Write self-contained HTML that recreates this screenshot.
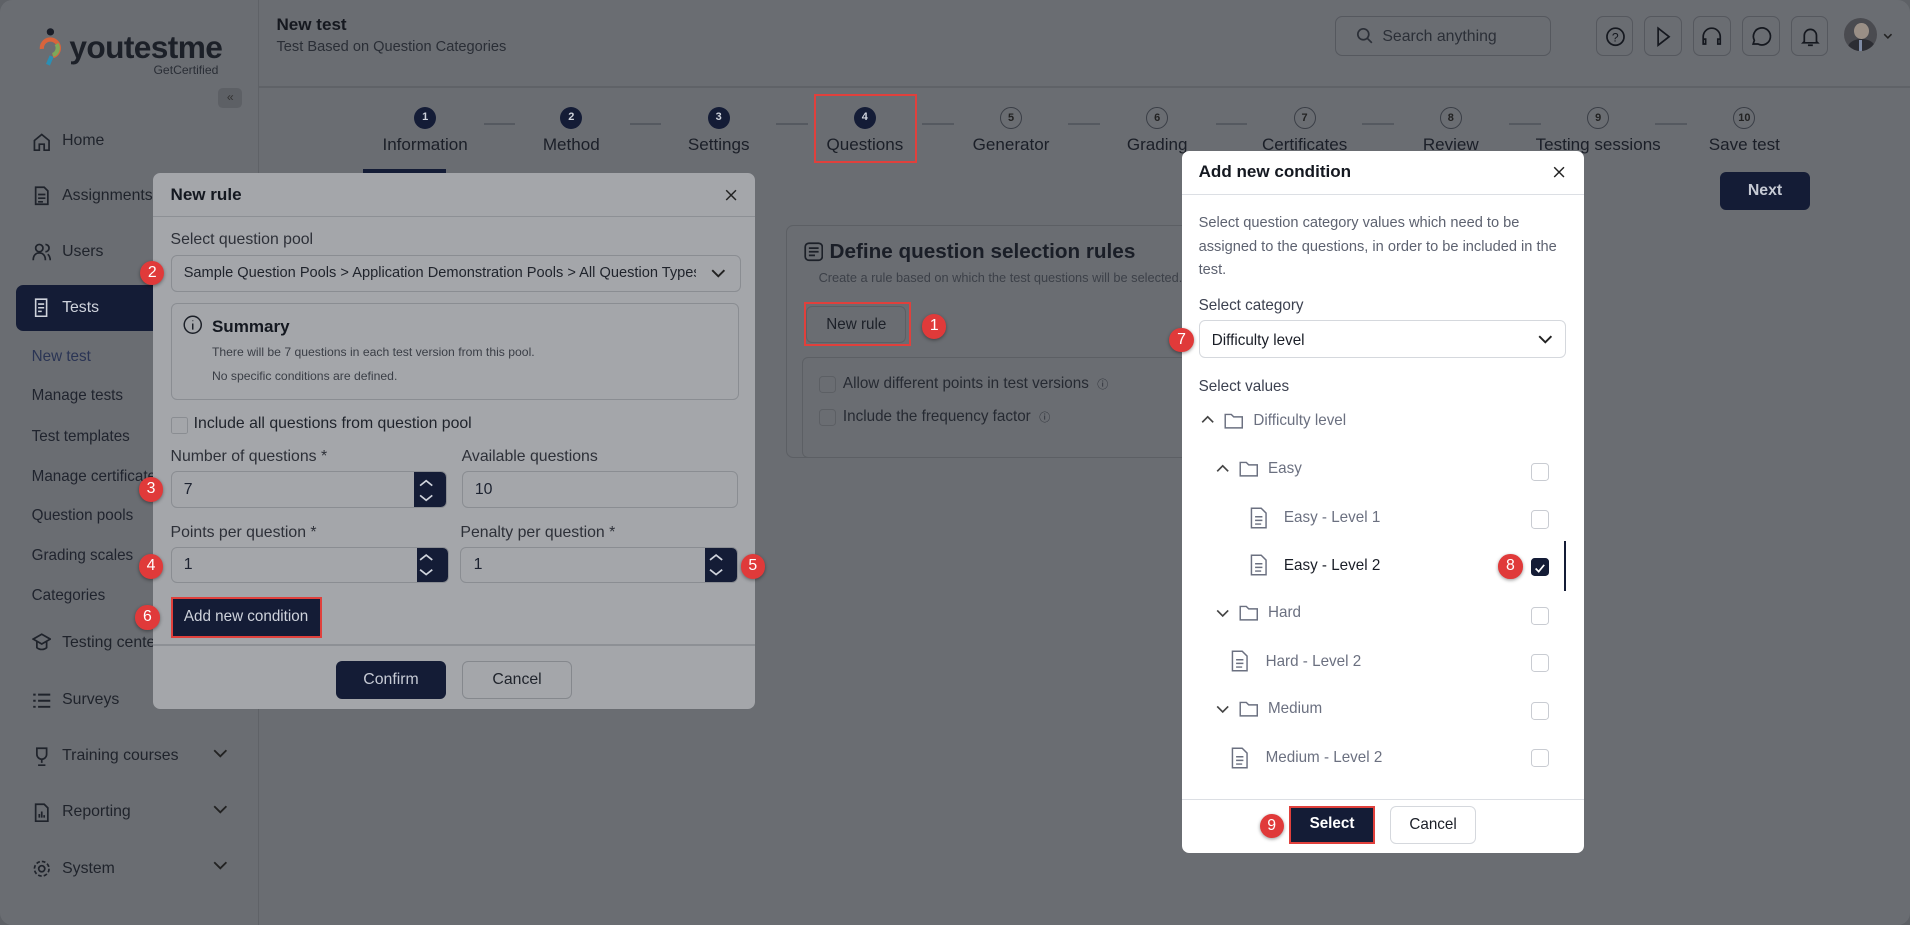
<!DOCTYPE html>
<html><head><meta charset="utf-8"><style>
*{box-sizing:border-box;margin:0;padding:0}
html,body{width:1910px;height:925px;overflow:hidden;background:#5e6166}
#w{zoom:1.21811;width:1568px;height:759px;position:relative;font-family:"Liberation Sans",sans-serif;color:#1c2230;background:#6a6d72;border-radius:10px;overflow:hidden}
.a{position:absolute}
.t{font-size:13px;color:#20242e}
.side .it{position:absolute;left:26px;font-size:13px;color:#1f232b;display:flex;align-items:center;gap:9px}
.ic{width:16px;height:16px}
.step{position:absolute;top:88px;text-align:center;width:120px;margin-left:-60px}
.step .c{width:18px;height:18px;border-radius:50%;margin:0 auto;font-size:9px;font-weight:bold;line-height:18px}
.step .l{font-size:14px;margin-top:5px;color:#1b1f28}
.dk{background:#141c36;color:#cfd3dc}
.lt{border:1px solid #3a3e46;color:#222}
.dash{position:absolute;top:101px;width:26px;height:2px;background:#555960}
.badge{position:absolute;width:20px;height:20px;border-radius:50%;background:#e03a3a;color:#fff;font-size:13px;text-align:center;line-height:20px;box-shadow:0 1px 3px rgba(0,0,0,.4)}
.fld{position:absolute;border:1px solid #8a8d92;border-radius:5px;background:#a4a6aa;font-size:13px;padding:0 10px;display:flex;align-items:center;white-space:nowrap;overflow:hidden}
.spin{position:absolute;right:-1px;top:-1px;bottom:-1px;width:27px;background:#141c36;border-radius:0 5px 5px 0}
.lbl{position:absolute;font-size:13px;color:#2d3038}
.cb{position:absolute;width:15px;height:15px;border:1px solid #c9ccd2;border-radius:3px;background:#fff}
.row{position:absolute;font-size:12.5px;color:#6b7080;display:flex;align-items:center;gap:8px}
.chev{position:absolute}
</style></head><body><div id="w">
<div class="a" style="left:212px;top:0;width:1px;height:759px;background:#5f6267"></div>
<div class="a" style="left:213px;top:71px;width:1355px;height:1px;background:#5f6267"></div>
<div class="a" style="left:30px;top:22px;width:22px;height:32px">
<svg width="22" height="32" viewBox="0 0 22 32"><circle cx="11" cy="4" r="3" fill="#1a1e28"/><path d="M4 18a7 7 0 1 1 9 6" stroke="#d8643c" stroke-width="3.5" fill="none"/><path d="M12 24l-3 7" stroke="#2b8fb4" stroke-width="3.5"/><path d="M16 14a6 6 0 0 1-3 9" stroke="#7da85a" stroke-width="3.5" fill="none"/></svg></div>
<div class="a" style="left:57px;top:24px;font-size:26px;font-weight:bold;color:#1c2028;letter-spacing:-.5px">youtestme</div>
<div class="a" style="left:126px;top:52px;font-size:10px;color:#2a2e36">GetCertified</div>
<div class="a" style="left:179px;top:72px;width:20px;height:17px;border-radius:4px;background:#5d6065;font-size:10px;text-align:center;line-height:16px;color:#333">«</div>
<div class="side">
<div class="it" style="top:108px"><svg class="ic" viewBox="0 0 16 16" fill="none" stroke="#1f232b" stroke-width="1.4"><path d="M2 7l6-5 6 5v8H10v-5H6v5H2z"/></svg>Home</div>
<div class="it" style="top:153px"><svg class="ic" viewBox="0 0 16 16" fill="none" stroke="#1f232b" stroke-width="1.4"><path d="M3 1h7l3 3v11H3z M5 7h6M5 10h6M5 13h4"/></svg>Assignments</div>
<div class="it" style="top:199px"><svg class="ic" viewBox="0 0 16 16" fill="none" stroke="#1f232b" stroke-width="1.4"><circle cx="6" cy="5" r="3"/><path d="M1 15c0-4 2-6 5-6s5 2 5 6M11 2a3 3 0 0 1 0 6M13 10c1 1 2 3 2 5"/></svg>Users</div>
</div>
<div class="a" style="left:13px;top:234px;width:200px;height:38px;background:#141c36;border-radius:6px 0 0 6px"></div>
<div class="a" style="left:26px;top:245px;font-size:13px;color:#cfd3dc;display:flex;gap:9px;align-items:center"><svg class="ic" viewBox="0 0 16 16" fill="none" stroke="#cfd3dc" stroke-width="1.3"><path d="M3 1h9v14H3zM5 5h5M5 8h5M5 11h3"/></svg>Tests</div>
<div class="a" style="left:26px;top:286px;font-size:12.5px;color:#2a3454">New test</div>
<div class="a t" style="left:26px;top:318px;font-size:12.5px">Manage tests</div>
<div class="a t" style="left:26px;top:351px;font-size:12.5px">Test templates</div>
<div class="a t" style="left:26px;top:384px;font-size:12.5px">Manage certificates</div>
<div class="a t" style="left:26px;top:416px;font-size:12.5px">Question pools</div>
<div class="a t" style="left:26px;top:449px;font-size:12.5px">Grading scales</div>
<div class="a t" style="left:26px;top:482px;font-size:12.5px">Categories</div>
<div class="side">
<div class="it" style="top:520px"><svg class="ic" viewBox="0 0 16 16" fill="none" stroke="#1f232b" stroke-width="1.4"><path d="M8 1l7 4-7 4-7-4zM4 7v5c2 2 6 2 8 0V7"/></svg>Testing centers</div>
<div class="it" style="top:567px"><svg class="ic" viewBox="0 0 16 16" fill="none" stroke="#1f232b" stroke-width="1.6"><path d="M1 3h2M1 8h2M1 13h2M5 3h10M5 8h10M5 13h10"/></svg>Surveys</div>
<div class="it" style="top:613px"><svg class="ic" viewBox="0 0 16 16" fill="none" stroke="#1f232b" stroke-width="1.4"><path d="M4 1h8v5a4 4 0 0 1-8 0zM8 10v3M5 15h6"/></svg>Training courses</div>
<div class="it" style="top:659px"><svg class="ic" viewBox="0 0 16 16" fill="none" stroke="#1f232b" stroke-width="1.4"><path d="M3 1h7l3 3v11H3zM6 12V9M8 12V7M10 12v-2"/></svg>Reporting</div>
<div class="it" style="top:705px"><svg class="ic" viewBox="0 0 16 16" fill="none" stroke="#1f232b" stroke-width="1.4"><circle cx="8" cy="8" r="2.5"/><circle cx="8" cy="8" r="6" stroke-dasharray="3 1.7"/></svg>System</div>
</div>
<svg class="chev" style="left:175px;top:615px" width="12" height="8" fill="none" stroke="#222" stroke-width="1.5"><path d="M1 1l5 5 5-5"/></svg>
<svg class="chev" style="left:175px;top:661px" width="12" height="8" fill="none" stroke="#222" stroke-width="1.5"><path d="M1 1l5 5 5-5"/></svg>
<svg class="chev" style="left:175px;top:707px" width="12" height="8" fill="none" stroke="#222" stroke-width="1.5"><path d="M1 1l5 5 5-5"/></svg>
<div class="a" style="left:227px;top:12px;font-size:14px;font-weight:bold;color:#15181f">New test</div>
<div class="a" style="left:227px;top:32px;font-size:12px;color:#2a2e36">Test Based on Question Categories</div>
<div class="a" style="left:1096px;top:13px;width:177px;height:33px;border:1px solid #55585e;border-radius:6px;font-size:13px;color:#2b2f37;padding:9px 0 0 38px">Search anything</div>
<svg class="a" style="left:1113px;top:22px" width="14" height="14" viewBox="0 0 14 14" fill="none" stroke="#2b2f37" stroke-width="1.4"><circle cx="6" cy="6" r="4.5"/><path d="M9.5 9.5L13 13"/></svg>
<div class="a" style="left:1310px;top:13px;display:flex;gap:9px">
<div style="width:31px;height:33px;border:1px solid #55585e;border-radius:6px"></div><div style="width:31px;height:33px;border:1px solid #55585e;border-radius:6px"></div><div style="width:31px;height:33px;border:1px solid #55585e;border-radius:6px"></div><div style="width:31px;height:33px;border:1px solid #55585e;border-radius:6px"></div><div style="width:31px;height:33px;border:1px solid #55585e;border-radius:6px"></div></div>
<svg class="a" style="left:1310px;top:13px" width="200" height="33" fill="none" stroke="#15181f" stroke-width="1.4"><circle cx="16" cy="17" r="7"/><text x="13" y="21" font-size="10" fill="#15181f" stroke="none" font-family="Liberation Sans">?</text><path d="M51 10l9 7-9 7z"/><path d="M88 21v-4a7 7 0 0 1 14 0v4M88 19h2v4h-2zM100 19h2v4h-2z"/><path d="M129 23l1-3a7 7 0 1 1 3 3z"/><path d="M171 21v-5a5 5 0 0 1 10 0v5l1 1h-12zM174 24h4"/></svg>
<div class="a" style="left:1514px;top:15px;width:27px;height:27px;border-radius:50%;overflow:hidden;background:#4a4b50">
<div class="a" style="left:8px;top:4px;width:12px;height:13px;border-radius:50%;background:#9a8f86"></div>
<div class="a" style="left:3px;top:17px;width:22px;height:14px;border-radius:50% 50% 0 0;background:#2c2d33"></div>
<div class="a" style="left:12px;top:18px;width:3px;height:9px;background:#7e8aa3"></div></div>
<svg class="chev" style="left:1546px;top:27px" width="8" height="5" fill="none" stroke="#222" stroke-width="1.3"><path d="M1 1l3 3 3-3"/></svg>
<div class="step" style="left:349px"><div class="c dk">1</div><div class="l">Information</div></div>
<div class="step" style="left:469px"><div class="c dk">2</div><div class="l">Method</div></div>
<div class="step" style="left:590px"><div class="c dk">3</div><div class="l">Settings</div></div>
<div class="step" style="left:710px"><div class="c dk">4</div><div class="l">Questions</div></div>
<div class="step" style="left:830px"><div class="c lt">5</div><div class="l">Generator</div></div>
<div class="step" style="left:950px"><div class="c lt">6</div><div class="l">Grading</div></div>
<div class="step" style="left:1071px"><div class="c lt">7</div><div class="l">Certificates</div></div>
<div class="step" style="left:1191px"><div class="c lt">8</div><div class="l">Review</div></div>
<div class="step" style="left:1312px"><div class="c lt">9</div><div class="l">Testing sessions</div></div>
<div class="step" style="left:1432px"><div class="c lt">10</div><div class="l">Save test</div></div>
<div class="dash" style="left:397px"></div><div class="dash" style="left:517px"></div><div class="dash" style="left:637px"></div><div class="dash" style="left:757px"></div><div class="dash" style="left:877px"></div><div class="dash" style="left:998px"></div><div class="dash" style="left:1118px"></div><div class="dash" style="left:1239px"></div><div class="dash" style="left:1359px"></div>
<div class="a" style="left:668px;top:77px;width:85px;height:57px;border:2px solid #e0403c"></div>
<div class="a" style="left:298px;top:139px;width:68px;height:3px;background:#141c36"></div>
<div class="a" style="left:1412px;top:141px;width:74px;height:31px;background:#141c36;border-radius:5px;color:#c6cad4;font-size:13px;font-weight:bold;text-align:center;line-height:31px">Next</div>
<div class="a" style="left:645px;top:185px;width:340px;height:191px;border:1px solid #5c5f64;border-radius:6px"></div>
<svg class="a" style="left:660px;top:199px" width="16" height="16" fill="none" stroke="#1c2028" stroke-width="1.4"><rect x="1" y="1" width="14" height="14" rx="3"/><path d="M4 5h8M4 8h8M4 11h5"/></svg>
<div class="a" style="left:681px;top:197px;font-size:17px;font-weight:bold;color:#1a1e27">Define question selection rules</div>
<div class="a" style="left:672px;top:222px;font-size:10.5px;color:#3c4048">Create a rule based on which the test questions will be selected.</div>
<div class="a" style="left:660px;top:248px;width:88px;height:36px;border:2px solid #e0403c"></div>
<div class="a" style="left:662px;top:251px;width:82px;height:31px;border:1px solid #5c5f64;border-radius:5px;font-size:12.5px;text-align:center;line-height:30px;color:#1c2028">New rule</div>
<div class="badge" style="left:757px;top:258px">1</div>
<div class="a" style="left:658px;top:293px;width:330px;height:83px;border:1px solid #5c5f64;border-radius:5px"></div>
<div class="a" style="left:672px;top:309px;width:14px;height:14px;border:1px solid #5c5f64;border-radius:3px"></div>
<div class="a" style="left:692px;top:308px;font-size:12.5px;color:#262a32">Allow different points in test versions &nbsp;<span style="font-size:9px">ⓘ</span></div>
<div class="a" style="left:672px;top:336px;width:14px;height:14px;border:1px solid #5c5f64;border-radius:3px"></div>
<div class="a" style="left:692px;top:335px;font-size:12.5px;color:#262a32">Include the frequency factor &nbsp;<span style="font-size:9px">ⓘ</span></div>
<div class="a" style="left:126px;top:142px;width:494px;height:440px;background:#a4a6aa;border-radius:6px">
<div class="a" style="left:14px;top:10px;font-size:14px;font-weight:bold;color:#141820">New rule</div>
<svg class="a" style="left:469px;top:13px" width="10" height="10" stroke="#222" stroke-width="1.2"><path d="M1 1l8 8M9 1l-8 8"/></svg>
<div class="a" style="left:0;top:35px;width:494px;height:1px;background:#8d9095"></div>
<div class="lbl" style="left:14px;top:48px">Select question pool</div>
<div class="fld" style="left:14px;top:67px;width:468px;height:31px;color:#1f232b;font-size:12px;padding-right:36px"><span style="overflow:hidden;display:block;width:424px">Sample Question Pools &gt; Application Demonstration Pools &gt; All Question Types</span></div>
<svg class="a" style="left:458px;top:79px" width="12" height="8" fill="none" stroke="#222" stroke-width="1.6"><path d="M1 1l5 5 5-5"/></svg>
<div class="a" style="left:14px;top:107px;width:467px;height:79px;border:1px solid #8a8d92;border-radius:5px"></div>
<svg class="a" style="left:24px;top:117px" width="16" height="16" fill="none" stroke="#1c2028" stroke-width="1.2"><circle cx="8" cy="8" r="7"/><path d="M8 7v5M8 4.5v.5"/></svg>
<div class="a" style="left:48px;top:118px;font-size:14px;font-weight:bold;color:#141820">Summary</div>
<div class="a" style="left:48px;top:141px;font-size:10px;color:#3a3e46">There will be 7 questions in each test version from this pool.</div>
<div class="a" style="left:48px;top:161px;font-size:10px;color:#3a3e46">No specific conditions are defined.</div>
<div class="a" style="left:14px;top:200px;width:14px;height:14px;border:1px solid #8a8d92;border-radius:2px"></div>
<div class="lbl" style="left:33px;top:199px;color:#20242c">Include all questions from question pool</div>
<div class="lbl" style="left:14px;top:226px">Number of questions *</div>
<div class="lbl" style="left:253px;top:226px">Available questions</div>
<div class="fld" style="left:14px;top:245px;width:227px;height:30px">7<div class="spin"></div></div>
<div class="fld" style="left:253px;top:245px;width:227px;height:30px">10</div>
<div class="lbl" style="left:14px;top:288px">Points per question *</div>
<div class="lbl" style="left:252px;top:288px">Penalty per question *</div>
<div class="fld" style="left:14px;top:307px;width:229px;height:30px">1<div class="spin"></div></div>
<div class="fld" style="left:252px;top:307px;width:228px;height:30px">1<div class="spin"></div></div>
<div class="a" style="left:14px;top:348px;width:124px;height:34px;border:2px solid #e0403c;background:#141c36;color:#cfd3dc;font-size:12.5px;text-align:center;line-height:30px">Add new condition</div>
<div class="a" style="left:0;top:387px;width:494px;height:1px;background:#8d9095"></div>
<div class="a" style="left:150px;top:401px;width:90px;height:31px;background:#141c36;border-radius:5px;color:#c6cad4;font-size:13px;text-align:center;line-height:31px">Confirm</div>
<div class="a" style="left:253px;top:401px;width:91px;height:31px;border:1px solid #85888d;border-radius:5px;color:#1f232b;font-size:13px;text-align:center;line-height:30px">Cancel</div>
</div>
<svg class="a" style="left:340px;top:387px" width="270" height="90" fill="none" stroke="#cfd3dc" stroke-width="1.4"><path d="M5 12l5-4 5 4M5 20l5 4 5-4"/><path d="M5 73l5-4 5 4M5 81l5 4 5-4"/><path d="M243 73l5-4 5 4M243 81l5 4 5-4"/></svg>
<div class="badge" style="left:115px;top:214px">2</div>
<div class="badge" style="left:114px;top:392px">3</div>
<div class="badge" style="left:114px;top:455px">4</div>
<div class="badge" style="left:608px;top:455px">5</div>
<div class="badge" style="left:111px;top:497px">6</div>
<div class="a" style="left:970px;top:124px;width:330px;height:576px;background:#fff;border-radius:6px">
<div class="a" style="left:14px;top:9px;font-size:14px;font-weight:bold;color:#141820">Add new condition</div>
<svg class="a" style="left:305px;top:12px" width="10" height="10" stroke="#222" stroke-width="1.2"><path d="M1 1l8 8M9 1l-8 8"/></svg>
<div class="a" style="left:0;top:35px;width:330px;height:1px;background:#dcdfe4"></div>
<div class="a" style="left:14px;top:50px;width:310px;font-size:12px;line-height:19.5px;color:#5d6270">Select question category values which need to be assigned to the questions, in order to be included in the test.</div>
<div class="a" style="left:14px;top:120px;font-size:12.5px;color:#3c4150">Select category</div>
<div class="a" style="left:14px;top:139px;width:302px;height:31px;border:1px solid #d5d8dd;border-radius:5px;font-size:12.5px;padding:9px 10px;color:#1a1e27">Difficulty level</div>
<svg class="a" style="left:293px;top:151px" width="12" height="8" fill="none" stroke="#222" stroke-width="1.6"><path d="M1 1l5 5 5-5"/></svg>
<div class="a" style="left:14px;top:186px;font-size:12.5px;color:#3c4150">Select values</div>
<div class="row" style="left:16px;top:214px"><svg width="11" height="8" fill="none" stroke="#444" stroke-width="1.4"><path d="M1 6l4.5-4.5 4.5 4.5"/></svg><svg width="16" height="14" fill="none" stroke="#6b7080" stroke-width="1.2"><path d="M1 2h5l2 2h7v9H1z"/></svg>Difficulty level</div>
<div class="row" style="left:28px;top:254px"><svg width="11" height="8" fill="none" stroke="#444" stroke-width="1.4"><path d="M1 6l4.5-4.5 4.5 4.5"/></svg><svg width="16" height="14" fill="none" stroke="#6b7080" stroke-width="1.2"><path d="M1 2h5l2 2h7v9H1z"/></svg>Easy</div>
<div class="row" style="left:55px;top:292px;gap:13px"><svg width="16" height="18" fill="none" stroke="#6b7080" stroke-width="1.2"><path d="M2 1h8l4 4v12H2zM5 8h6M5 11h6M5 14h5"/></svg>Easy - Level 1</div>
<div class="row" style="left:55px;top:331px;gap:13px;color:#1a1e27"><svg width="16" height="18" fill="none" stroke="#6b7080" stroke-width="1.2"><path d="M2 1h8l4 4v12H2zM5 8h6M5 11h6M5 14h5"/></svg>Easy - Level 2</div>
<div class="row" style="left:28px;top:372px"><svg width="11" height="8" fill="none" stroke="#444" stroke-width="1.4"><path d="M1 2l4.5 4.5 4.5-4.5"/></svg><svg width="16" height="14" fill="none" stroke="#6b7080" stroke-width="1.2"><path d="M1 2h5l2 2h7v9H1z"/></svg>Hard</div>
<div class="row" style="left:40px;top:410px;gap:13px"><svg width="16" height="18" fill="none" stroke="#6b7080" stroke-width="1.2"><path d="M2 1h8l4 4v12H2zM5 8h6M5 11h6M5 14h5"/></svg>Hard - Level 2</div>
<div class="row" style="left:28px;top:451px"><svg width="11" height="8" fill="none" stroke="#444" stroke-width="1.4"><path d="M1 2l4.5 4.5 4.5-4.5"/></svg><svg width="16" height="14" fill="none" stroke="#6b7080" stroke-width="1.2"><path d="M1 2h5l2 2h7v9H1z"/></svg>Medium</div>
<div class="row" style="left:40px;top:489px;gap:13px"><svg width="16" height="18" fill="none" stroke="#6b7080" stroke-width="1.2"><path d="M2 1h8l4 4v12H2zM5 8h6M5 11h6M5 14h5"/></svg>Medium - Level 2</div>
<div class="cb" style="left:287px;top:256px"></div>
<div class="cb" style="left:287px;top:295px"></div>
<div class="cb" style="left:287px;top:334px;background:#141c36;border-color:#141c36"><svg width="13" height="13" fill="none" stroke="#fff" stroke-width="1.4"><path d="M3 7l2.5 2.5L10 4"/></svg></div>
<div class="a" style="left:314px;top:320px;width:2px;height:41px;background:#141c36"></div>
<div class="cb" style="left:287px;top:374px"></div>
<div class="cb" style="left:287px;top:413px"></div>
<div class="cb" style="left:287px;top:452px"></div>
<div class="cb" style="left:287px;top:491px"></div>
<div class="a" style="left:0;top:532px;width:330px;height:1px;background:#dcdfe4"></div>
<div class="a" style="left:88px;top:538px;width:71px;height:31px;border:2px solid #e0403c;background:#141c36;color:#fff;font-size:12.5px;font-weight:bold;text-align:center;line-height:27px">Select</div>
<div class="a" style="left:171px;top:538px;width:71px;height:31px;border:1px solid #d5d8dd;border-radius:5px;color:#1a1e27;font-size:12.5px;text-align:center;line-height:29px">Cancel</div>
</div>
<div class="badge" style="left:960px;top:269px">7</div>
<div class="badge" style="left:1230px;top:455px">8</div>
<div class="badge" style="left:1034px;top:668px">9</div>
</div></body></html>
